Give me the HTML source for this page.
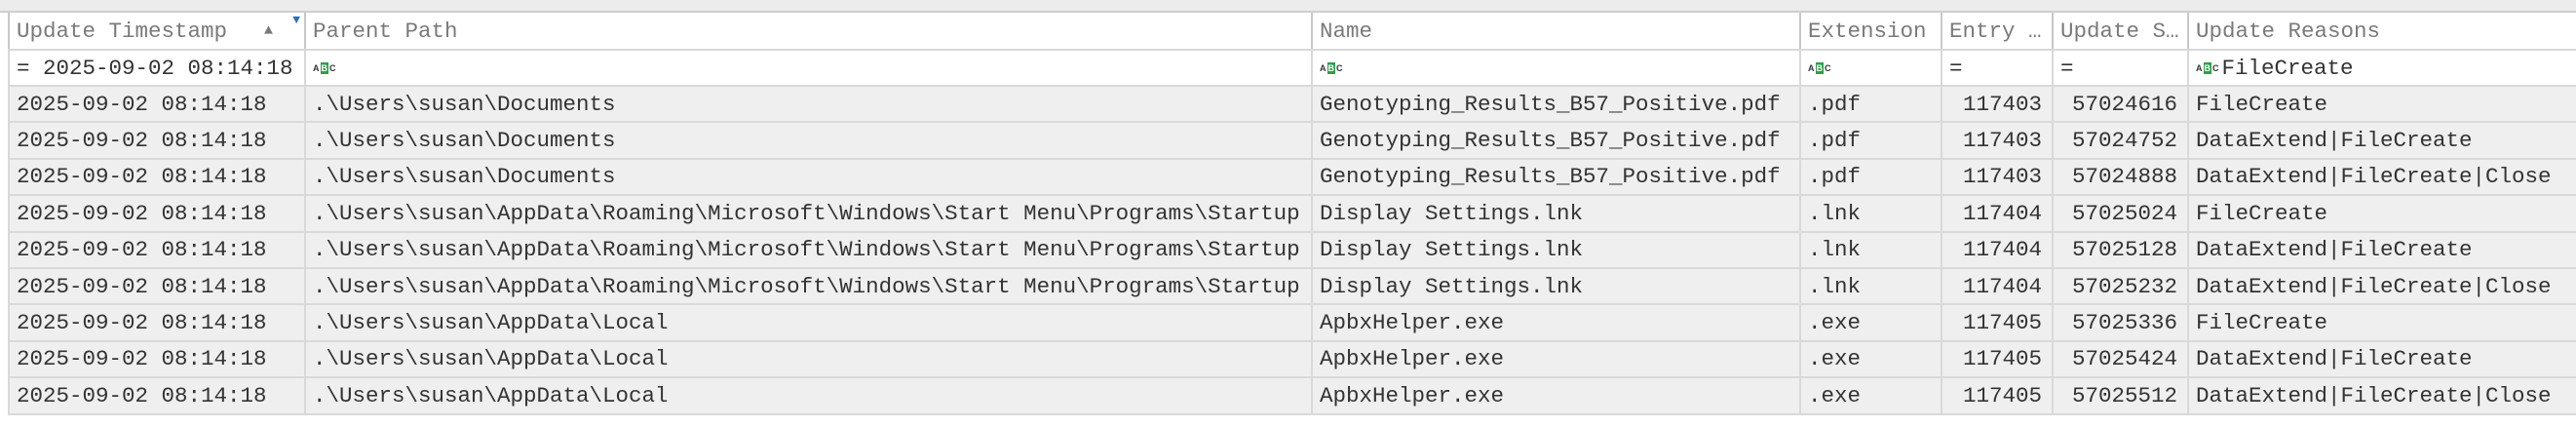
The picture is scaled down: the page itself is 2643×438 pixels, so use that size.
<!DOCTYPE html>
<html><head><meta charset="utf-8"><style>
body{margin:0;width:2643px;height:438px;background:#fff;overflow:hidden;font-family:"Liberation Mono",monospace;font-size:22.5px;color:#333}
.top{position:absolute;left:0;top:0;width:2643px;height:11px;background:#ececec;border-bottom:2px solid #cfcfcf}
.row{position:absolute;left:8px;width:2635px;border-bottom:2px solid #d9d9d9;box-sizing:border-box}
.c{position:absolute;top:0;height:100%;box-sizing:border-box;border-left:2px solid #d9d9d9;padding-left:7px;white-space:nowrap;overflow:hidden;display:flex;align-items:center}
.r{justify-content:flex-end;padding-right:10px}
.hdr .c{color:#7a7a7a;border-left-color:#c8c8c8}
.d{background:#efefef}
.abc{display:inline-flex;align-items:center;font-size:9px;font-family:"Liberation Sans",sans-serif;color:#333;font-weight:bold;margin-right:3px}
.abc b{background:#2e9e4c;color:#fff;padding:1px 1px;margin:0 1px}
</style></head><body>
<div class="top"></div>
<div id="t"></div>
<script>
const cols=[0,304,1337,1838,1983,2097,2236,2635];
const rows=[
["2025-09-02 08:14:18",".\\Users\\susan\\Documents","Genotyping_Results_B57_Positive.pdf",".pdf","117403","57024616","FileCreate"],
["2025-09-02 08:14:18",".\\Users\\susan\\Documents","Genotyping_Results_B57_Positive.pdf",".pdf","117403","57024752","DataExtend|FileCreate"],
["2025-09-02 08:14:18",".\\Users\\susan\\Documents","Genotyping_Results_B57_Positive.pdf",".pdf","117403","57024888","DataExtend|FileCreate|Close"],
["2025-09-02 08:14:18",".\\Users\\susan\\AppData\\Roaming\\Microsoft\\Windows\\Start Menu\\Programs\\Startup","Display Settings.lnk",".lnk","117404","57025024","FileCreate"],
["2025-09-02 08:14:18",".\\Users\\susan\\AppData\\Roaming\\Microsoft\\Windows\\Start Menu\\Programs\\Startup","Display Settings.lnk",".lnk","117404","57025128","DataExtend|FileCreate"],
["2025-09-02 08:14:18",".\\Users\\susan\\AppData\\Roaming\\Microsoft\\Windows\\Start Menu\\Programs\\Startup","Display Settings.lnk",".lnk","117404","57025232","DataExtend|FileCreate|Close"],
["2025-09-02 08:14:18",".\\Users\\susan\\AppData\\Local","ApbxHelper.exe",".exe","117405","57025336","FileCreate"],
["2025-09-02 08:14:18",".\\Users\\susan\\AppData\\Local","ApbxHelper.exe",".exe","117405","57025424","DataExtend|FileCreate"],
["2025-09-02 08:14:18",".\\Users\\susan\\AppData\\Local","ApbxHelper.exe",".exe","117405","57025512","DataExtend|FileCreate|Close"]];
const abc='<span class="abc">A<b>B</b>C</span>';
function esc(s){return s.replace(/&/g,'&amp;').replace(/</g,'&lt;')}
function mk(top,h,cls,cells,raw){
 let s=`<div class="row ${cls}" style="top:${top}px;height:${h}px">`;
 cells.forEach((v,i)=>{const r=(i==4||i==5)&&cls=='d';s+=`<div class="c${r?' r':''}" style="left:${cols[i]}px;width:${cols[i+1]-cols[i]}px">${raw?v:esc(v)}</div>`});
 return s+'</div>';}
let h='';
h+=mk(13,39,'hdr',['Update Timestamp<span style="margin-left:38px;font-size:15px">▲</span><span style="position:absolute;right:4px;top:0;color:#2a6ebb;font-size:13px">▼</span>','Parent Path','Name','Extension','Entry …','Update S…','Update Reasons'],true);
h+=mk(52,37,'',['= 2025-09-02 08:14:18',abc,abc,abc,'=','=',abc+'FileCreate'],true);
rows.forEach((r,i)=>{h+=mk(89+i*37.4,37.4,'d',r)});
document.getElementById('t').innerHTML=h;
</script>
</body></html>
